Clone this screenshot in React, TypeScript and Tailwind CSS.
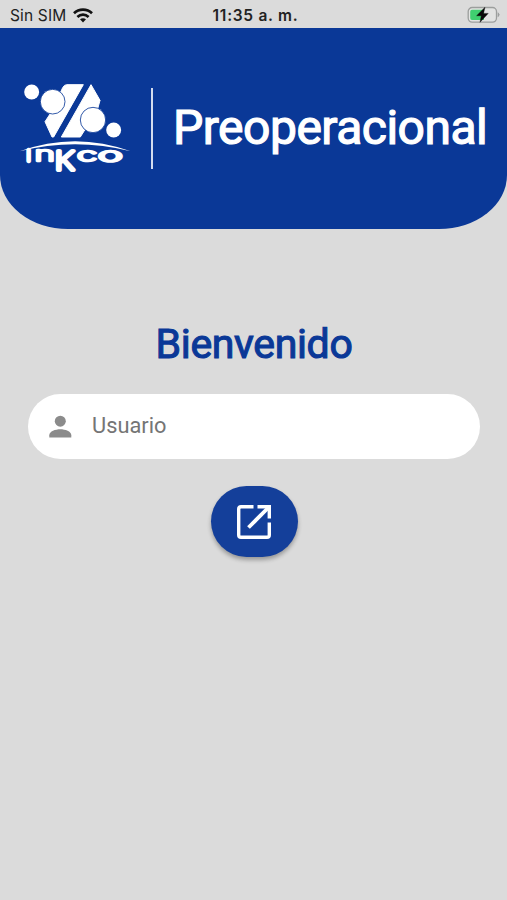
import { useState } from 'react';

function WifiIcon() {
  return (
    <svg width="20" height="15" viewBox="0 0 20 15" fill="none" stroke="#111" strokeWidth="2.7">
      <path d="M1 5.2C6 .4 14 .4 19 5.2" />
      <path d="M4.4 8.9C7.6 5.9 12.4 5.9 15.6 8.9" />
      <path d="M7 11.3C8.8 9.8 11.2 9.8 13 11.3L10 14.4Z" fill="#111" stroke="none" />
    </svg>
  );
}

function BatteryIcon() {
  return (
    <svg width="34" height="18" viewBox="0 0 34 18">
      <rect x="1.2" y="1.5" width="28.3" height="14.6" rx="4" fill="#e2e3e2" stroke="#9c9e9d" strokeWidth="1.3" />
      <path d="M5 3.7H17V13.9H5Q3.2 13.9 3.2 11.9V5.7Q3.2 3.7 5 3.7Z" fill="#40cf70" />
      <path d="M31 6.7Q33.6 8.7 31 10.7Z" fill="#9c9e9d" stroke="#9c9e9d" strokeWidth=".6" />
      <path d="M18 1.3L9.6 9.7H14.3L13 16.3L21.2 7.4H16.5Z" fill="#0a0a0a" stroke="#0a0a0a" strokeWidth=".4" />
    </svg>
  );
}

function InkcoLogo() {
  return (
    <svg width="150" height="110" viewBox="0 0 450 330" fill="#fff" className="shrink-0">
      <path d="M158 53Q163 44 170 44H220L131 201H126L105 155L128 120Z" strokeLinejoin="round" stroke="#fff" strokeWidth="3" />
      <path d="M243 44L270 91L262 120L211 201H154Z" strokeLinejoin="round" stroke="#fff" strokeWidth="3" />
      <circle cx="65" cy="66" r="22.5" />
      <circle cx="128" cy="95" r="37" stroke="#0a3897" strokeWidth="2.5" />
      <circle cx="249" cy="150" r="38" stroke="#0a3897" strokeWidth="2.5" />
      <circle cx="311" cy="180" r="22.5" />
      <path d="M29 244Q195 184 362 244Q195 202 29 244Z" />
      <g
        fontFamily="Inter, sans-serif"
        fontWeight="100"
        stroke="#fff"
        strokeLinejoin="round"
        strokeLinecap="round"
      >
        <text transform="translate(50 274)" fontSize="45" strokeWidth="13">I</text>
        <text transform="translate(74 274) scale(1.8 1)" fontSize="57" strokeWidth="8">n</text>
        <text transform="translate(134 300) scale(1.3 1)" fontSize="75" strokeWidth="12">K</text>
        <text transform="translate(202 273) scale(2.05 1)" fontSize="53" strokeWidth="8">c</text>
        <text transform="translate(265 273) scale(2.35 1)" fontSize="53" strokeWidth="8">o</text>
      </g>
    </svg>
  );
}

function PersonIcon() {
  return (
    <svg width="24" height="24" viewBox="0 0 24 24" fill="#8b8b8b">
      <circle cx="12.3" cy="6.2" r="5.5" />
      <path d="M1.3 22.6V20.2C1.3 16.2 7.5 14.2 12.3 14.2S23.3 16.2 23.3 20.2V22.6Z" />
    </svg>
  );
}

function OpenIcon() {
  return (
    <svg width="36" height="36" viewBox="0 0 36 36" fill="none" stroke="#fff" strokeWidth="3.4" strokeLinejoin="round">
      <path d="M17.5 2.7H5Q2.7 2.7 2.7 5V31Q2.7 33.3 5 33.3H31Q33.3 33.3 33.3 31V18.5" />
      <path d="M21.5 2.7H33.3V14.5" strokeLinejoin="miter" />
      <path d="M32.5 3.5L12.5 23.5" strokeWidth="3.8" />
    </svg>
  );
}

export default function App() {
  const [user, setUser] = useState('');

  return (
    <div className="flex h-[900px] w-[507px] flex-col overflow-hidden bg-[#dbdbdb] font-['Roboto',sans-serif]">
      <div className="grid h-7 shrink-0 grid-cols-3 items-center pl-[10px] pr-[6px] font-['Inter',sans-serif] text-[#222]">
        <div className="flex items-center gap-[7px]">
          <span className="whitespace-nowrap pt-[2px] text-[15.5px] leading-7 tracking-[0.15px]">Sin SIM</span>
          <WifiIcon />
        </div>
        <span className="whitespace-nowrap pt-[2px] text-center text-[15.5px] font-semibold leading-7 tracking-[0.72px]">
          11:35 a. m.
        </span>
        <div className="flex justify-end">
          <BatteryIcon />
        </div>
      </div>

      <header className="flex h-[201px] shrink-0 items-start rounded-b-[68px_54px] bg-[#0a3897] pl-[10px] pt-[42px]">
        <InkcoLogo />
        <div className="-ml-[9px] mt-[18px] h-[81px] w-[2px] shrink-0 bg-[#d3dcef]" />
        <h1 className="ml-5 mt-[30px] whitespace-nowrap text-[48px] font-normal leading-[56px] tracking-[-0.5px] text-white [-webkit-text-stroke:1.2px_#fff]">
          Preoperacional
        </h1>
      </header>

      <main className="flex flex-col items-center pl-7 pr-[27px] pt-[91px]">
        <h2 className="text-[41px] font-normal leading-[48px] tracking-[-0.35px] text-[#0a3897] [-webkit-text-stroke:1.1px_#0a3897]">
          Bienvenido
        </h2>
        <label className="mt-[26px] flex h-[65px] w-full items-center rounded-full bg-white pl-5 pr-8">
          <PersonIcon />
          <input
            value={user}
            onChange={e => setUser(e.target.value)}
            placeholder="Usuario"
            className="ml-5 min-w-0 flex-1 bg-transparent pb-px text-[21.8px] text-[#333] outline-none placeholder:text-[#757575]"
          />
        </label>
        <button
          aria-label="Ingresar"
          className="mt-[27px] flex h-[71px] w-[87px] items-center justify-center rounded-[36px] bg-[#143f9a] shadow-[0_3px_4px_rgba(0,0,0,0.3)]"
        >
          <OpenIcon />
        </button>
      </main>
    </div>
  );
}
